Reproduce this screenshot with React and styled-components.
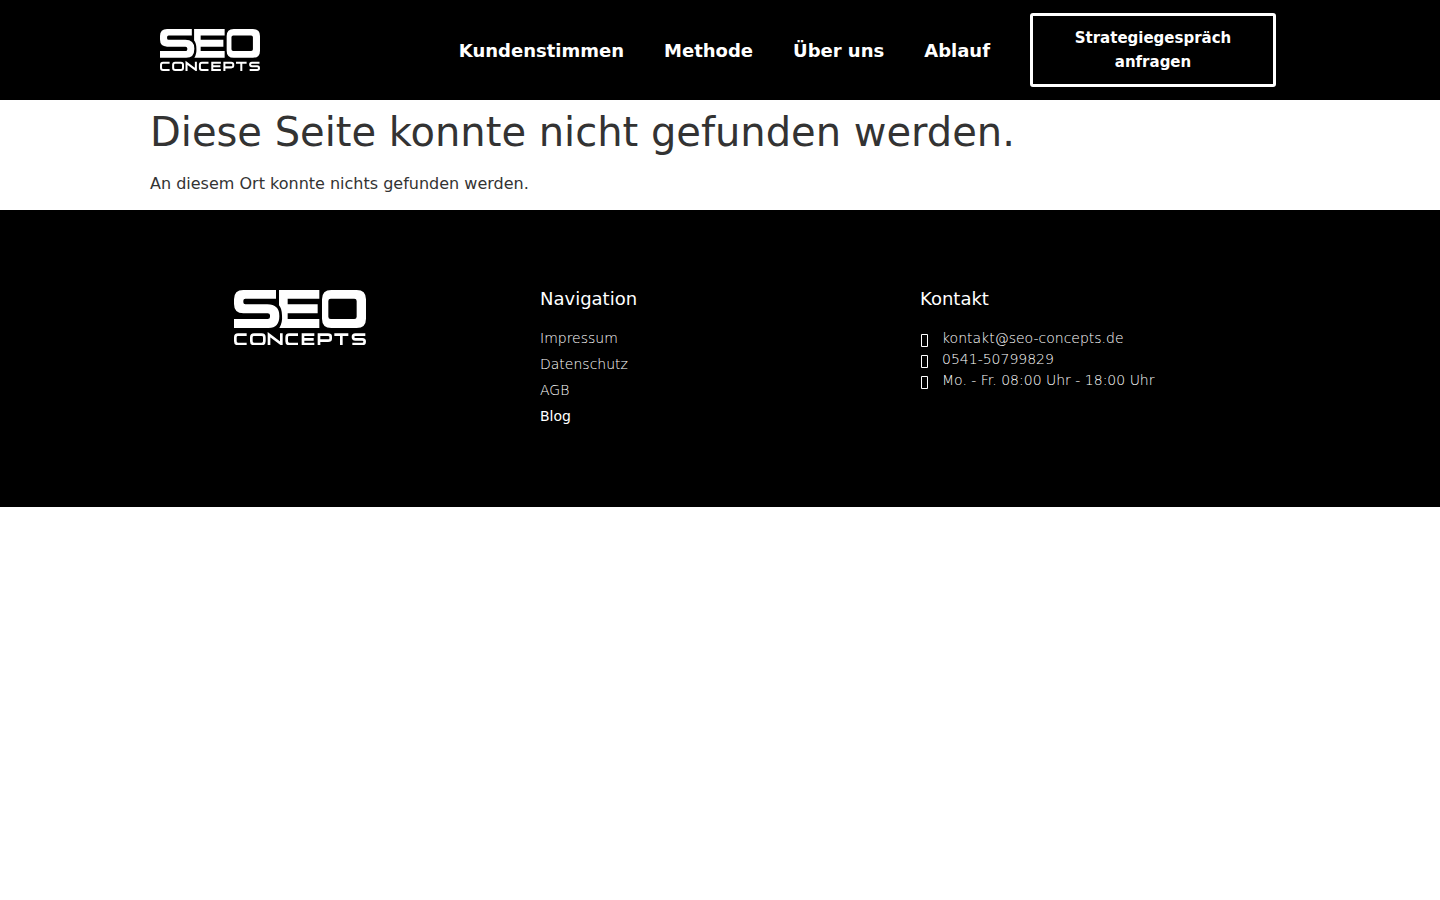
import React from "react";
import styled, { createGlobalStyle } from "styled-components";

const GlobalStyle = createGlobalStyle`
  * {
    box-sizing: border-box;
  }

  body {
    margin: 0;
    background: #fff;
    color: #333;
    font-family: "DejaVu Sans", sans-serif;
    font-size: 16px;
    line-height: 24px;
  }

  a {
    color: inherit;
    text-decoration: none;
  }
`;

const Container = styled.div`
  max-width: 1140px;
  margin: 0 auto;
`;

const Header = styled.header`
  background: #000;
  color: #fff;
`;

const HeaderRow = styled(Container)`
  display: flex;
  align-items: center;
  justify-content: space-between;
  min-height: 100px;
  padding: 0 14px 0 10px;
`;

const HeaderRight = styled.div`
  display: flex;
  align-items: center;
  gap: 40px;
`;

const Menu = styled.nav`
  display: flex;
  gap: 40px;
  font-size: 18px;
  font-weight: 700;
  line-height: 27px;
  white-space: nowrap;
`;

const CtaButton = styled.button`
  width: 246px;
  padding: 10px 24px;
  border: 3px solid #fff;
  border-radius: 3px;
  background: transparent;
  color: #fff;
  font: 700 15px/24px "DejaVu Sans", sans-serif;
  cursor: pointer;
`;

const LogoSvg = styled.svg`
  display: block;
  width: ${({ $width }) => $width}px;
  height: auto;
`;

const Title = styled.h1`
  margin: 8px 0 16px;
  font-size: 40px;
  font-weight: 400;
  line-height: 48px;
`;

const Text = styled.p`
  margin: 0 0 14px;
`;

const Main = styled.main`
  display: flow-root;
`;

const Footer = styled.footer`
  background: #000;
  color: #fff;
`;

const FooterGrid = styled(Container)`
  display: grid;
  grid-template-columns: repeat(3, 1fr);
  padding: 80px 0;
`;

const FooterLogo = styled.div`
  display: flex;
  align-items: flex-start;
  justify-content: center;
  padding-right: 80px;
`;

const Column = styled.div`
  padding-left: 10px;
`;

const ColumnTitle = styled.h2`
  margin: 0 0 20px;
  font-size: 18px;
  font-weight: 400;
  line-height: 18px;
`;

const List = styled.ul`
  display: grid;
  gap: ${({ $gap }) => $gap}px;
  margin: 0;
  padding: 0;
  list-style: none;
  font-size: 14px;
  font-weight: 200;
  line-height: 21px;
`;

const ContactItem = styled.li`
  display: flex;
  align-items: center;
  gap: 13px;
`;

const FooterLink = styled.a`
  font-weight: ${({ $active }) => ($active ? 400 : 200)};
`;

const Logo = ({ width }) => (
  <LogoSvg $width={width} viewBox="0 0 396 166" role="img" aria-label="SEO Concepts">
    <g fill="#fff">
      <path d="M28 0H126V26H34Q28 26 28 32V37Q28 43 34 43H100Q136 43 136 78Q136 114 104 114H0V87H101Q108 87 108 81V76Q108 70 101 70H28Q0 70 0 42V28Q0 0 28 0Z" />
      <path d="M135 0H256V26H161V43H251V70H161V87H256V114H136Q146 98 144 76Q143 54 135 46Z" />
      <path fillRule="evenodd" d="M292 0H368Q396 0 396 28V86Q396 114 368 114H292Q264 114 264 86V28Q264 0 292 0ZM290 26Q283 26 283 33V80Q283 87 290 87H361Q368 87 368 80V33Q368 26 361 26Z" />
    </g>
    <g fill="none" stroke="#fff" strokeWidth="8">
      <path d="M38 134H12Q4 134 4 142V154Q4 162 12 162H38" />
      <rect x="52" y="134" width="39" height="28" rx="8" />
      <path d="M105 166V134L142 162V130" />
      <path d="M192 134H166Q158 134 158 142V154Q158 162 166 162H192" />
      <path d="M241 134H207V162H241M207 148H239" />
      <path d="M255 166V134H282Q290 134 290 140V146Q290 152 282 152H255" />
      <path d="M301 134H343M322 134V166" />
      <path d="M394 134H364Q357 134 357 141Q357 148 364 148H385Q392 148 392 155Q392 162 385 162H355" />
    </g>
  </LogoSvg>
);

const MissingIcon = () => (
  <svg width="9" height="16" viewBox="0 0 9 16" aria-hidden="true">
    <path d="M1.5 3.5H7.5V15.5H1.5Z" fill="none" stroke="#fff" />
  </svg>
);

const menu = ["Kundenstimmen", "Methode", "Über uns", "Ablauf"];
const links = ["Impressum", "Datenschutz", "AGB", "Blog"];
const contacts = [
  { text: "kontakt@seo-concepts.de", href: "mailto:kontakt@seo-concepts.de" },
  { text: "0541-50799829", href: "tel:054150799829" },
  { text: "Mo. - Fr. 08:00 Uhr - 18:00 Uhr" }
];

const App = () => {
  return (
    <>
      <GlobalStyle />
      <Header>
        <HeaderRow>
          <a href="/">
            <Logo width={100} />
          </a>
          <HeaderRight>
            <Menu>
              {menu.map(item => (
                <a key={item} href="/">
                  {item}
                </a>
              ))}
            </Menu>
            <CtaButton type="button">Strategiegespräch anfragen</CtaButton>
          </HeaderRight>
        </HeaderRow>
      </Header>
      <Main>
        <Container>
          <Title>Diese Seite konnte nicht gefunden werden.</Title>
          <Text>An diesem Ort konnte nichts gefunden werden.</Text>
        </Container>
      </Main>
      <Footer>
        <FooterGrid>
          <FooterLogo>
            <Logo width={132} />
          </FooterLogo>
          <Column>
            <ColumnTitle>Navigation</ColumnTitle>
            <List $gap={5}>
              {links.map(item => (
                <li key={item}>
                  <FooterLink href="/" $active={item === "Blog"}>
                    {item}
                  </FooterLink>
                </li>
              ))}
            </List>
          </Column>
          <Column>
            <ColumnTitle>Kontakt</ColumnTitle>
            <List $gap={0}>
              {contacts.map(({ text, href }) => (
                <ContactItem key={text}>
                  <MissingIcon />
                  {href ? <a href={href}>{text}</a> : <span>{text}</span>}
                </ContactItem>
              ))}
            </List>
          </Column>
        </FooterGrid>
      </Footer>
    </>
  );
};

export default App;
